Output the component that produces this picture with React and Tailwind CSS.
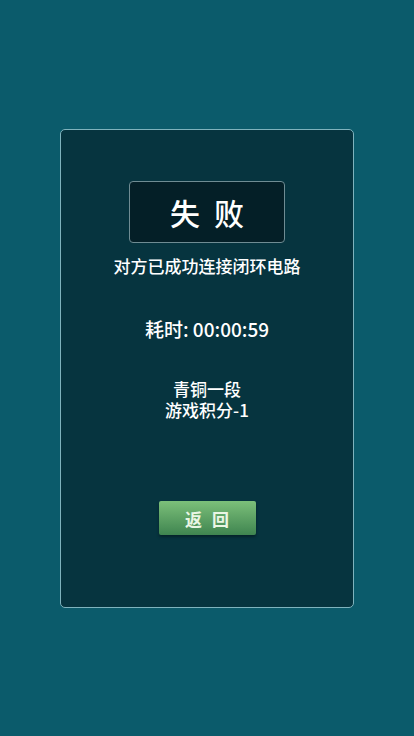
export default function App() {
  return (
    <div
      className="w-[414px] h-[736px] bg-[#0b5b6b] pt-[129px] px-[60px]"
      style={{ fontFamily: '"Noto Sans CJK SC", "Noto Sans", sans-serif' }}
    >
      {/* Result panel */}
      <div className="h-[479px] rounded-[5px] border border-[#7fb3bd] bg-[#06343f] flex flex-col items-center pt-[51px]">
        <div className="w-[156px] h-[62px] rounded-[4px] border border-[#6f8c93] bg-[#041f27] flex items-center justify-center">
          <span className="text-white text-[30px] font-medium tracking-[14px] pl-[14px] leading-none">失败</span>
        </div>
        <p className="mt-[12px] text-white text-[17px] font-medium leading-[22px]">对方已成功连接闭环电路</p>
        <p className="mt-[40px] text-white text-[19px] font-medium leading-[24px]">耗时: 00:00:59</p>
        <div className="mt-[37px] text-white text-[17px] font-medium leading-[22px] text-center">
          <p>青铜一段</p>
          <p className="-mt-[1px]">游戏积分-1</p>
        </div>
        <button className="mt-[80px] w-[97px] h-[34px] rounded-[2px] bg-gradient-to-b from-[#7cc07a] to-[#3f8550] shadow-[0_2px_3px_rgba(0,0,0,0.35)] flex items-center justify-center">
          <span className="text-[#eaf6e4] text-[17px] font-bold tracking-[10px] pl-[10px] leading-none">返回</span>
        </button>
      </div>
    </div>
  );
}
